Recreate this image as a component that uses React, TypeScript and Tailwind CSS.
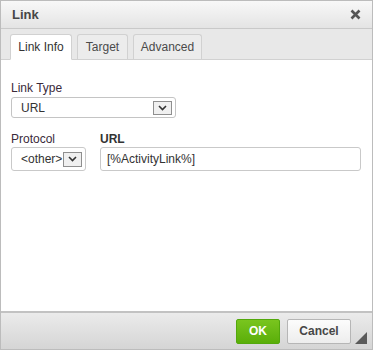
import React from 'react'

const Caret = () => (
  <svg width="9" height="6" viewBox="0 0 9 6" fill="none" stroke="#333" strokeWidth="1.6">
    <path d="M1 1 L4.5 4.5 L8 1" />
  </svg>
)

const ArrowBox = ({ h }: { h: string }) => (
  <span className={`mr-[3px] w-[19px] ${h} border border-[#8f8f8f] bg-[#f0f0f0] flex items-center justify-center`}>
    <Caret />
  </span>
)

export default function App() {
  return (
    <div
      className="w-[373px] h-[350px] flex flex-col border border-[#bcbcbc] bg-white"
      style={{ fontFamily: '"Liberation Sans", Arial, sans-serif' }}
    >
      {/* Title */}
      <div className="h-[28px] shrink-0 flex items-center justify-between pl-[11px] pr-[11px] bg-gradient-to-b from-[#f8f8f8] to-[#e4e4e4] border-b border-[#c9c9c9]">
        <span className="text-[13px] font-bold text-[#474747]">Link</span>
        <svg width="11" height="11" viewBox="0 0 11 11">
          <path d="M1.5 1.5 L9.5 9.5 M9.5 1.5 L1.5 9.5" stroke="#555" strokeWidth="2.6" />
        </svg>
      </div>

      {/* Tabs */}
      <div className="h-[31px] shrink-0 flex items-end gap-[5px] pl-[9px] bg-[#e8e8e8] border-b border-[#d1d1d1]">
        <div className="w-[62px] h-[26px] -mb-px flex items-center justify-center bg-white border border-[#d1d1d1] border-b-white rounded-t-[3px] text-[12px] text-[#333]">
          Link Info
        </div>
        <div className="w-[51px] h-[25px] flex items-center justify-center bg-[#ececec] border border-[#d1d1d1] border-b-0 rounded-t-[3px] text-[12px] text-[#4a4a4a]">
          Target
        </div>
        <div className="w-[69px] h-[25px] flex items-center justify-center bg-[#ececec] border border-[#d1d1d1] border-b-0 rounded-t-[3px] text-[12px] text-[#4a4a4a]">
          Advanced
        </div>
      </div>

      {/* Body */}
      <div className="flex-1 bg-white pl-[10px] pt-[21px]">
        <div className="text-[12px] text-[#3a2a3a] leading-[15px]">Link Type</div>
        <div className="mt-[1px] w-[165px] h-[21px] flex items-center justify-between bg-white border border-[#c4c4c4] rounded-[3px]">
          <span className="pl-[9px] text-[12px] text-[#333]">URL</span>
          <ArrowBox h="h-[14px]" />
        </div>

        <div className="flex gap-[14px] mt-[14px]">
          <div className="flex flex-col">
            <span className="text-[12px] text-[#3a2a3a] leading-[15px]">Protocol</span>
            <div className="w-[75px] h-[24px] flex items-center justify-between bg-white border border-[#c9c9c9] rounded-[3px]">
              <span className="pl-[9px] text-[12px] text-[#333]">&lt;other&gt;</span>
              <ArrowBox h="h-[15px]" />
            </div>
          </div>
          <div className="flex flex-col">
            <span className="text-[12px] font-bold text-[#333] leading-[15px]">URL</span>
            <div className="w-[261px] h-[24px] flex items-center bg-white border border-[#c9c9c9] rounded-[3px] pl-[6px] text-[12px] text-[#333]">
              [%ActivityLink%]
            </div>
          </div>
        </div>
      </div>

      {/* Footer */}
      <div className="relative h-[38px] shrink-0 flex items-center justify-end gap-[7px] pr-[21px] bg-gradient-to-b from-[#ebebeb] to-[#d5d5d5] border-t-2 border-[#c2c2c2]">
        <button className="h-[25px] w-[44px] rounded-[2px] border border-[#53a80c] bg-gradient-to-b from-[#79c51e] to-[#5aae08] text-[12px] font-bold text-white">
          OK
        </button>
        <button className="h-[25px] w-[64px] rounded-[2px] border border-[#b6b6b6] bg-gradient-to-b from-[#fcfcfc] to-[#ededed] text-[12px] font-bold text-[#474747]">
          Cancel
        </button>
        <svg width="12" height="12" viewBox="0 0 12 12" className="absolute right-[5px] bottom-[5px]">
          <path d="M12 0 L12 12 L0 12 Z" fill="#5a5a5a" />
        </svg>
      </div>
    </div>
  )
}
